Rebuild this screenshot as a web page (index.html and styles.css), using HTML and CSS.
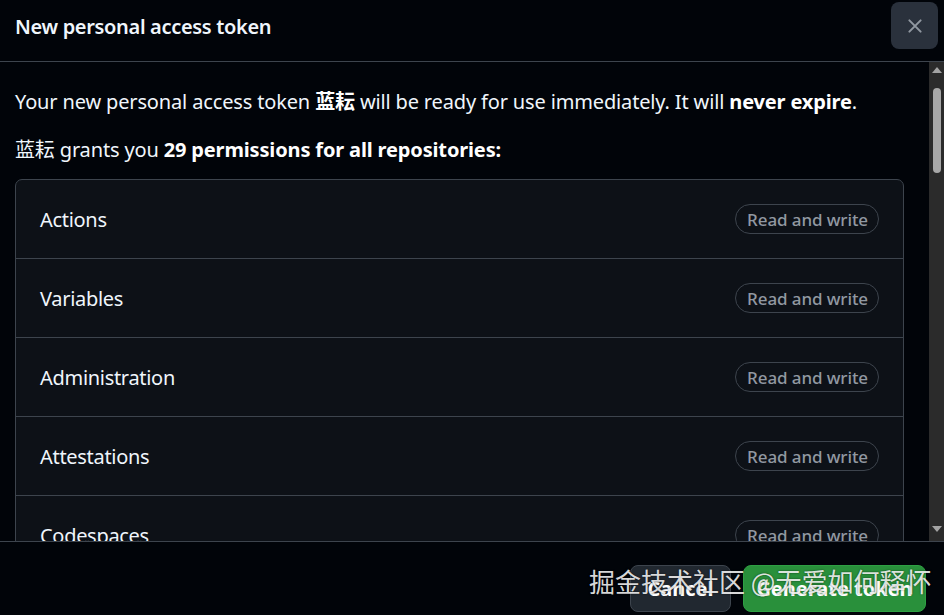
FILE: index.html
```html
<!DOCTYPE html>
<html lang="en">
<head>
<meta charset="utf-8">
<title>New personal access token</title>
<link rel="stylesheet" href="styles.css">
</head>
<body>
<div class="dialog">
  <header class="dialog-header">
    <h1 class="dialog-title">New personal access token</h1>
    <button class="close-btn" aria-label="Close">
      <svg width="16" height="16" viewBox="0 0 16 16"><path d="M3.5 3.5 L12.5 12.5 M12.5 3.5 L3.5 12.5" stroke="#9198a1" stroke-width="1.6" stroke-linecap="round" fill="none"/></svg>
    </button>
  </header>
  <div class="dialog-body">
    <div class="body-content">
      <p class="lead">Your new personal access token <strong>蓝耘</strong> will be ready for use immediately. It will <strong>never expire</strong>.</p>
      <p class="lead second">蓝耘 grants you <strong>29 permissions for all repositories:</strong></p>
      <ul class="perm-list">
        <li class="perm-row"><span class="perm-name">Actions</span><span class="badge">Read and write</span></li>
        <li class="perm-row"><span class="perm-name">Variables</span><span class="badge">Read and write</span></li>
        <li class="perm-row"><span class="perm-name">Administration</span><span class="badge">Read and write</span></li>
        <li class="perm-row"><span class="perm-name">Attestations</span><span class="badge">Read and write</span></li>
        <li class="perm-row"><span class="perm-name">Codespaces</span><span class="badge">Read and write</span></li>
        <li class="perm-row"><span class="perm-name">Contents</span><span class="badge">Read and write</span></li>
      </ul>
    </div>
    <div class="scrollbar">
      <span class="arrow up"></span>
      <div class="track"><div class="thumb"></div></div>
      <span class="arrow down"></span>
    </div>
  </div>
  <footer class="dialog-footer">
    <button class="btn btn-cancel">Cancel</button>
    <button class="btn btn-primary">Generate token</button>
    <div class="watermark">掘金技术社区 @无爱如何释怀</div>
  </footer>
</div>
</body>
</html>
```

FILE: styles.css
```css
* { box-sizing: border-box; }
html, body {
  margin: 0;
  padding: 0;
  background: #010409;
  height: 100%;
  overflow: hidden;
}
body {
  font-family: "Noto Sans", "Noto Sans CJK SC", sans-serif;
  color: #f0f6fc;
}
.dialog {
  display: flex;
  flex-direction: column;
  height: 615px;
  width: 944px;
}
.dialog-header {
  height: 62px;
  flex: none;
  display: flex;
  align-items: flex-start;
  justify-content: space-between;
  border-bottom: 1px solid #3d444d;
  padding-left: 15px;
  padding-right: 6px;
}
.dialog-title {
  margin: 0;
  font-size: 20px;
  font-weight: 600;
  line-height: 30px;
  margin-top: 12px;
  letter-spacing: -0.33px;
}
.close-btn {
  margin-top: 2px;
  width: 47px;
  height: 47px;
  border: none;
  border-radius: 8px;
  background: #2a313c;
  display: flex;
  align-items: center;
  justify-content: center;
  padding: 0;
}
.close-btn svg { width: 20px; height: 20px; }
.dialog-body {
  flex: none;
  height: 479px;
  display: flex;
  overflow: hidden;
}
.body-content {
  flex: 1;
  padding: 0 25px 0 15px;
  overflow: hidden;
}
.lead {
  margin: 0;
  font-size: 20px;
  line-height: 30px;
  letter-spacing: -0.15px;
}
.lead:first-child { margin-top: 25px; }
.lead.second { margin-top: 18px; }
.lead strong { font-weight: 700; color: #ffffff; }
.perm-list {
  list-style: none;
  margin: 14px 0 0;
  padding: 0;
  background: #0d1117;
  border: 1px solid #3d444d;
  border-radius: 7px;
}
.perm-row {
  height: 79px;
  display: flex;
  align-items: center;
  justify-content: space-between;
  padding: 0 24px;
  border-top: 1px solid #3d444d;
}
.perm-row:first-child { border-top: none; height: 78px; }
.perm-name {
  font-size: 20px;
  letter-spacing: -0.3px;
  color: #f0f6fc;
}
.badge {
  display: inline-flex;
  align-items: center;
  height: 30px;
  padding: 0 10px 0 11px;
  border: 1px solid #3d444d;
  border-radius: 15px;
  font-size: 17px;
  color: #9198a1;
  font-weight: 500;
  letter-spacing: -0.1px;
}
.scrollbar {
  flex: none;
  width: 15px;
  background: #2b2b2b;
  display: flex;
  flex-direction: column;
  align-items: center;
  padding: 4px 0;
}
.arrow {
  width: 0;
  height: 0;
  border-left: 5px solid transparent;
  border-right: 5px solid transparent;
  flex: none;
}
.arrow.up { border-bottom: 6px solid #a3a3a3; margin-top: 1px; }
.arrow.down { border-top: 6px solid #a3a3a3; margin-bottom: 5px; }
.track {
  flex: 1;
  width: 100%;
  display: flex;
  justify-content: center;
  padding-top: 15px;
}
.thumb {
  width: 8px;
  height: 85px;
  border-radius: 4px;
  background: #a8a8a8;
}
.dialog-footer {
  flex: 1;
  position: relative;
  border-top: 1px solid #3d444d;
  display: flex;
  justify-content: flex-end;
  align-items: flex-start;
  gap: 12px;
  padding: 23px 18px 0 0;
}
.btn {
  height: 47px;
  border-radius: 8px;
  font-family: "Noto Sans", sans-serif;
  font-size: 20px;
  font-weight: 700;
  color: #ffffff;
  padding: 0;
  white-space: nowrap;
}
.btn-cancel {
  width: 101px;
  background: #212830;
  border: 1px solid #3d444d;
}
.btn-primary {
  width: 183px;
  background: #29903b;
  border: 1px solid #2ea043;
}
.watermark {
  position: absolute;
  left: 589px;
  top: 22px;
  font-family: "Noto Sans CJK SC", sans-serif;
  font-size: 26px;
  line-height: 34px;
  color: rgba(255, 255, 255, 0.85);
  text-shadow: 0 0 2px rgba(0,0,0,0.6);
  white-space: nowrap;
  letter-spacing: 0px;
}
```
